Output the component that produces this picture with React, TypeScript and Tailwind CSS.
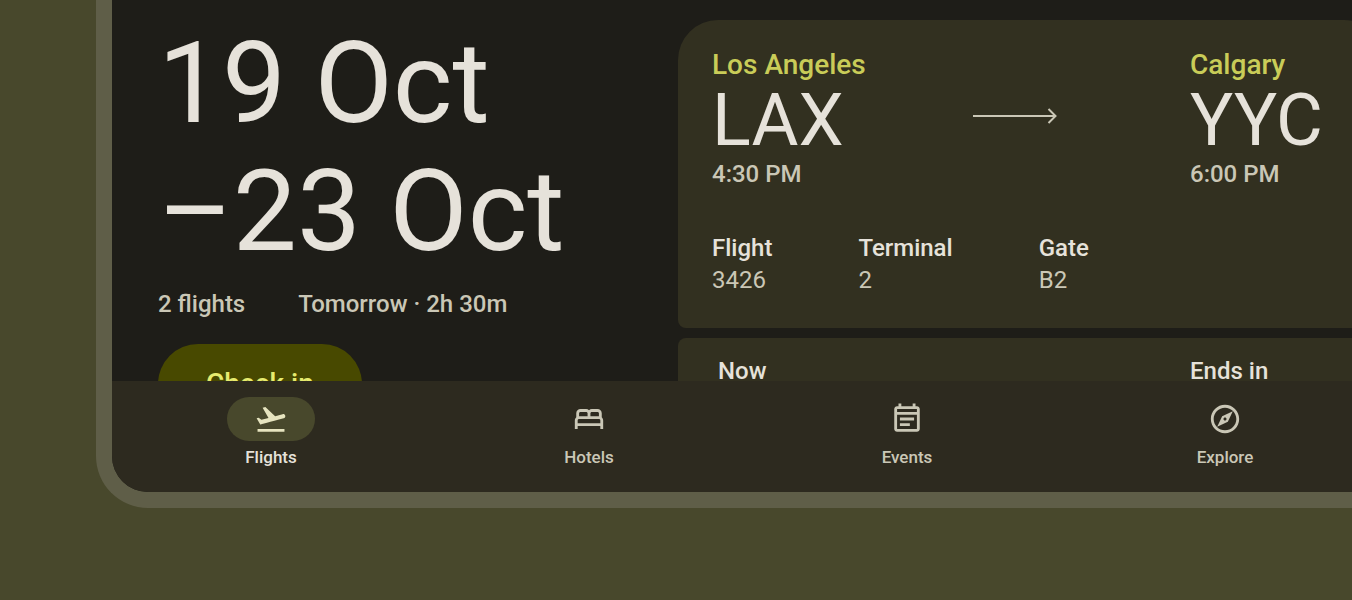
import {
  MdFlightTakeoff,
  MdOutlineBed,
  MdOutlineEventNote,
  MdOutlineExplore,
} from "react-icons/md";
import type { IconType } from "react-icons";

type Destination = { label: string; icon: IconType; active?: boolean };

const destinations: Destination[] = [
  { label: "Flights", icon: MdFlightTakeoff, active: true },
  { label: "Hotels", icon: MdOutlineBed },
  { label: "Events", icon: MdOutlineEventNote },
  { label: "Explore", icon: MdOutlineExplore },
];

const details = [
  { term: "Flight", value: "3426" },
  { term: "Terminal", value: "2" },
  { term: "Gate", value: "B2" },
];

function Airport({ city, code, time }: { city: string; code: string; time: string }) {
  return (
    <div>
      <p className="text-[28px] leading-9 font-medium text-[#c9cc58]">{city}</p>
      <p className="text-[72px] leading-[75px] text-[#e6e2da]">{code}</p>
      <p className="text-2xl leading-8 font-medium text-[#cac7b6]">{time}</p>
    </div>
  );
}

function RouteArrow() {
  return (
    <svg
      className="mt-[60px] h-[18px] w-[86px] shrink-0"
      viewBox="0 0 86 18"
      fill="none"
      stroke="#cac7b6"
      strokeWidth="2"
      aria-hidden="true"
    >
      <path d="M1 9H84M76.5 2L83.5 9L76.5 16" />
    </svg>
  );
}

function TripSummary() {
  return (
    <section className="w-[566px] shrink-0 pt-[19px] pl-[46px]">
      <h1 className="text-[114px] leading-[128px] text-[#e6e2da]">
        19 Oct
        <br />
        –23 Oct
      </h1>
      <div className="mt-[13px] flex gap-[53px] text-2xl leading-8 font-medium text-[#cac7b6]">
        <span>2 flights</span>
        <span>Tomorrow · 2h 30m</span>
      </div>
      <button
        type="button"
        className="mt-6 h-20 rounded-full bg-[#484900] px-12 text-[28px] leading-9 font-medium text-[#e6eb6f]"
      >
        Check in
      </button>
    </section>
  );
}

function FlightCards() {
  return (
    <section className="flex grow flex-col gap-[10px] pt-5">
      <article className="rounded-t-[40px] rounded-b-lg bg-[#323020] pt-[27px] pb-8 pl-[34px]">
        <div className="grid grid-cols-[478px_1fr]">
          <div className="grid grid-cols-[260px_1fr]">
            <Airport city="Los Angeles" code="LAX" time="4:30 PM" />
            <RouteArrow />
          </div>
          <Airport city="Calgary" code="YYC" time="6:00 PM" />
        </div>
        <dl className="mt-[42px] flex gap-[86px] text-2xl leading-8">
          {details.map(({ term, value }) => (
            <div key={term}>
              <dt className="font-medium text-[#e6e2da]">{term}</dt>
              <dd className="text-[#cac7b6]">{value}</dd>
            </div>
          ))}
        </dl>
      </article>
      <article className="grid grid-cols-[472px_1fr] rounded-t-lg bg-[#323020] pt-[17px] pb-8 pl-10 text-2xl leading-8 font-medium text-[#e6e2da]">
        <p>Now</p>
        <p>Ends in</p>
      </article>
    </section>
  );
}

function NavigationBar() {
  return (
    <nav className="grid shrink-0 grid-cols-4 bg-[#2d2a1f] pt-4 pb-[23px]">
      {destinations.map(({ label, icon: Icon, active }) => (
        <a
          key={label}
          href={`#${label.toLowerCase()}`}
          aria-current={active ? "page" : undefined}
          className={
            active
              ? "flex flex-col items-center gap-1 text-[#e6e2da]"
              : "flex flex-col items-center gap-1 text-[#cac7b6]"
          }
        >
          <span
            className={
              active
                ? "flex h-11 w-[88px] items-center justify-center rounded-full bg-[#48482c] text-[#e6e4bf]"
                : "flex h-11 w-[88px] items-center justify-center rounded-full"
            }
          >
            <Icon size={34} aria-hidden="true" />
          </span>
          <span className="text-[17px] leading-6 font-medium">{label}</span>
        </a>
      ))}
    </nav>
  );
}

export default function App() {
  return (
    <div className="flex h-screen flex-col overflow-hidden bg-[#48482c] pb-[92px] pl-24 font-['Roboto',sans-serif]">
      <div className="-mr-8 flex min-h-0 grow flex-col overflow-hidden rounded-bl-[52px] border-b-16 border-l-16 border-[#5f5e48] bg-[#1e1d18]">
        <main className="flex min-h-0 grow overflow-hidden">
          <TripSummary />
          <FlightCards />
        </main>
        <NavigationBar />
      </div>
    </div>
  );
}
